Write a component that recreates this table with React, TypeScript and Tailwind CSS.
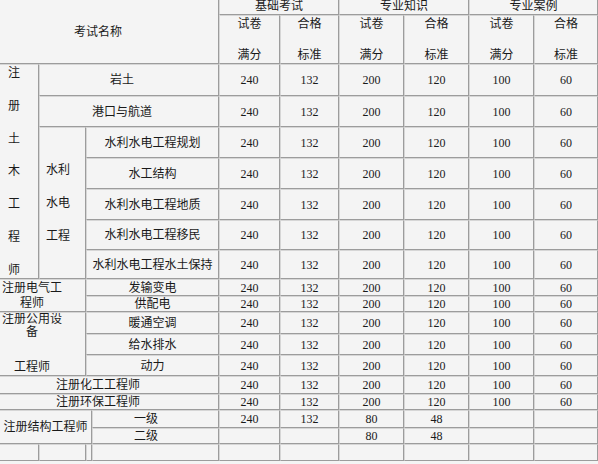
const cell =
  'flex items-center justify-center border-r border-b border-l border-t border-r-[#9c9c9c] border-b-[#9c9c9c] border-l-[#d6d6d6] border-t-[#d6d6d6] overflow-hidden';

const std = ['240', '132', '200', '120', '100', '60'];

function Nums({ values }: { values: string[] }) {
  return (
    <>
      {values.map((v, i) => (
        <div key={i} className={cell}>
          {v}
        </div>
      ))}
    </>
  );
}

function HeadPair() {
  return (
    <>
      <div className={`${cell} flex-col !justify-between`}>
        <span>试卷</span>
        <span>满分</span>
      </div>
      <div className={`${cell} flex-col !justify-between`}>
        <span>合格</span>
        <span>标准</span>
      </div>
    </>
  );
}

export default function App() {
  return (
    <div className="h-[464px] w-[598px] overflow-hidden bg-[#f4f4f4] text-[12px] leading-[16px] text-[#1a1a1a] font-['Liberation_Serif','Noto_Sans_CJK_SC',serif]">
      <div className="mt-[-3px] ml-[-1px] grid w-[599px] grid-cols-[40px_47px_6px_127px_61px_59px_65px_65px_65px_64px] grid-rows-[18px_49px_32px_31px_31px_31px_31px_30px_29px_17px_16px_22px_21px_21px_18px_16px_18px_16px_17px]">
        {/* header */}
        <div className={`${cell} col-[1/5] row-[1/3] pr-[22px] pt-[2px]`}>考试名称</div>
        <div className={`${cell} col-[5/7] row-[1/2]`}>基础考试</div>
        <div className={`${cell} col-[7/9] row-[1/2]`}>专业知识</div>
        <div className={`${cell} col-[9/11] row-[1/2]`}>专业案例</div>
        <HeadPair />
        <HeadPair />
        <HeadPair />

        {/* 注册土木工程师 */}
        <div className={`${cell} col-[1/2] row-[3/10] flex-col !items-start !justify-between pl-[8px]`}>
          {['注', '册', '土', '木', '工', '程', '师'].map((c) => (
            <span key={c}>{c}</span>
          ))}
        </div>
        <div className={`${cell} col-[2/5] row-[3/4] pr-[14px]`}>岩土</div>
        <Nums values={std} />
        <div className={`${cell} col-[2/5] row-[4/5] pr-[14px]`}>港口与航道</div>
        <Nums values={std} />
        <div className={`${cell} col-[2/3] row-[5/10] flex-col !items-start gap-[17px] pl-[6px]`}>
          <span>水利</span>
          <span>水电</span>
          <span>工程</span>
        </div>
        <div className={`${cell} col-[3/5] row-[5/6]`}>水利水电工程规划</div>
        <Nums values={std} />
        <div className={`${cell} col-[3/5] row-[6/7]`}>水工结构</div>
        <Nums values={std} />
        <div className={`${cell} col-[3/5] row-[7/8]`}>水利水电工程地质</div>
        <Nums values={std} />
        <div className={`${cell} col-[3/5] row-[8/9]`}>水利水电工程移民</div>
        <Nums values={std} />
        <div className={`${cell} col-[3/5] row-[9/10]`}>水利水电工程水土保持</div>
        <Nums values={std} />

        {/* 注册电气工程师 */}
        <div className={`${cell} col-[1/3] row-[10/12] pr-[21px] text-center leading-[15px]`}>注册电气工程师</div>
        <div className={`${cell} col-[3/5] row-[10/11]`}>发输变电</div>
        <Nums values={std} />
        <div className={`${cell} col-[3/5] row-[11/12]`}>供配电</div>
        <Nums values={std} />

        {/* 注册公用设备工程师 */}
        <div className={`${cell} col-[1/3] row-[12/15] flex-col !justify-between pr-[21px] text-center`}>
          <span className="leading-[13px]">注册公用设备</span>
          <span>工程师</span>
        </div>
        <div className={`${cell} col-[3/5] row-[12/13]`}>暖通空调</div>
        <Nums values={std} />
        <div className={`${cell} col-[3/5] row-[13/14]`}>给水排水</div>
        <Nums values={std} />
        <div className={`${cell} col-[3/5] row-[14/15]`}>动力</div>
        <Nums values={std} />

        <div className={`${cell} col-[1/5] row-[15/16] pr-[22px]`}>注册化工工程师</div>
        <Nums values={std} />
        <div className={`${cell} col-[1/5] row-[16/17] pr-[22px]`}>注册环保工程师</div>
        <Nums values={std} />

        {/* 注册结构工程师 */}
        <div className={`${cell} col-[1/4] row-[17/19] whitespace-nowrap`}>注册结构工程师</div>
        <div className={`${cell} col-[4/5] row-[17/18] pr-[19px]`}>一级</div>
        <Nums values={['240', '132', '80', '48', '', '']} />
        <div className={`${cell} col-[4/5] row-[18/19] pr-[19px]`}>二级</div>
        <Nums values={['', '', '80', '48', '', '']} />

        {/* empty last row */}
        <Nums values={['', '', '', '', '', '', '', '', '', '']} />
      </div>
    </div>
  );
}
